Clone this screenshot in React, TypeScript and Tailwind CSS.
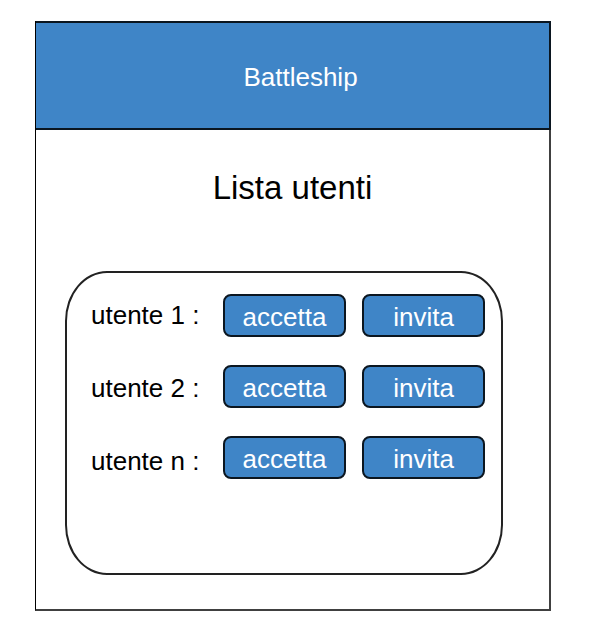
const users = ["utente 1", "utente 2", "utente n"];

const buttonClass =
  "h-[43px] rounded-lg border-2 border-[#0b1620] bg-[#3f85c7] pt-0.5 text-center leading-9 text-white";

export default function App() {
  return (
    <div className="min-h-screen bg-white pt-[21px] pr-[47px] pb-[27px] pl-[35px] font-['Liberation_Sans',Arial,sans-serif] text-[26px] text-black">
      <main className="border-r-2 border-b-2 border-l border-[#404040] border-l-black">
        <header className="-mr-0.5 flex h-[109px] items-center justify-center border-t-2 border-r-2 border-b-2 border-[#0b1620] bg-[#3f85c7] pt-0.5 pl-4 text-white">
          <p className="leading-9">Battleship</p>
        </header>
        <h1 className="pt-9 text-center text-[33px] leading-11">Lista utenti</h1>
        <section className="mt-[61px] mr-[46px] mb-[34px] ml-[29px] flex h-[304px] items-start justify-between rounded-[42px/50px] border-2 border-[#222222] pt-[21px] pr-4 pl-6">
          <ul className="flex flex-col gap-[30px]">
            {users.map((user, i) => (
              <li key={user} id={`user-${i}`} className="leading-[43px] whitespace-nowrap">
                {user} :
              </li>
            ))}
          </ul>
          <ul className="flex flex-col gap-7">
            {users.map((user, i) => (
              <li key={user} className="grid grid-cols-[123px_123px] gap-4">
                <button type="button" aria-describedby={`user-${i}`} className={buttonClass}>
                  accetta
                </button>
                <button type="button" aria-describedby={`user-${i}`} className={buttonClass}>
                  invita
                </button>
              </li>
            ))}
          </ul>
        </section>
      </main>
    </div>
  );
}
